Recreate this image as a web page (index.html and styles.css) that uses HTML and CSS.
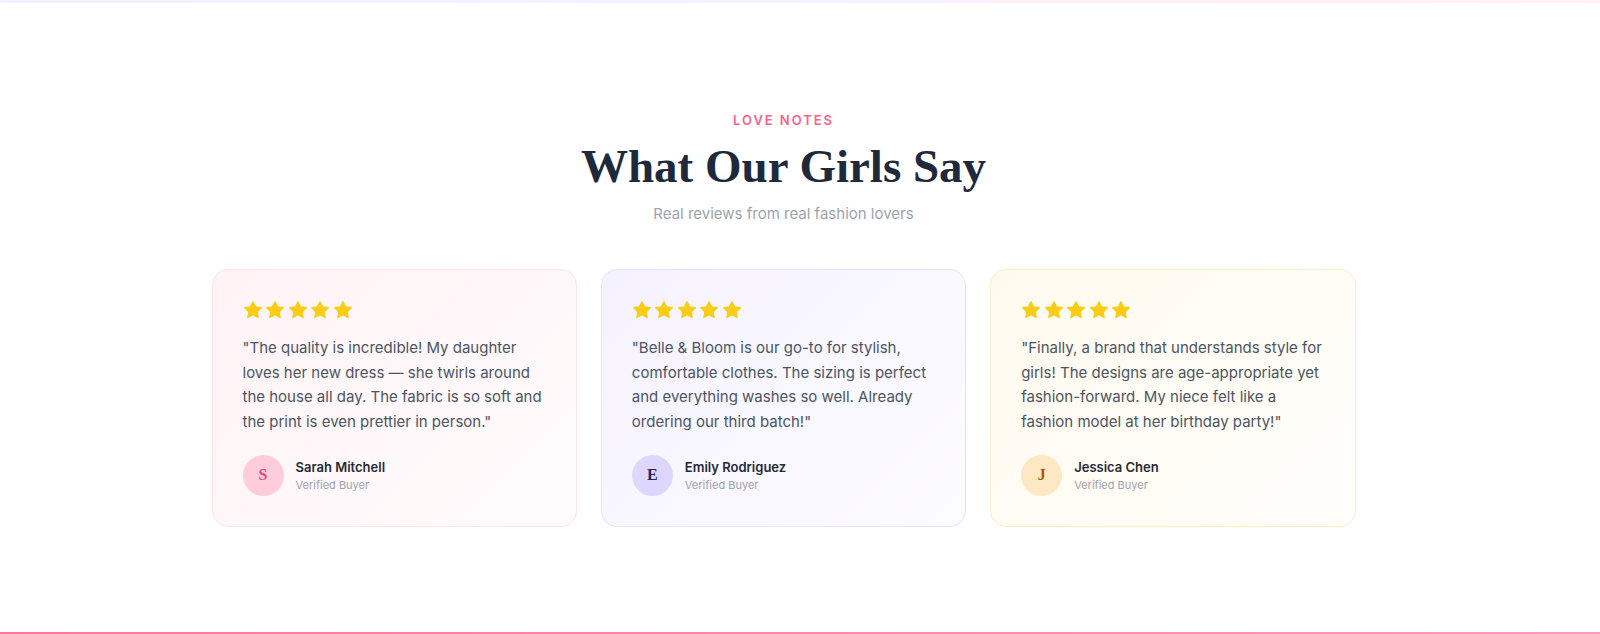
FILE: index.html
```html
<!DOCTYPE html>
<html lang="en">
<head>
    <meta charset="UTF-8">
    <meta name="viewport" content="width=device-width, initial-scale=1.0">
    <title>Love Notes - Belle &amp; Bloom</title>
    <link rel="stylesheet" href="styles.css">
</head>
<body>
    <div class="top-fade"></div>

    <section class="testimonials">
        <div class="container">
            <div class="section-head">
                <span class="eyebrow">Love Notes</span>
                <h2>What Our Girls Say</h2>
                <p class="subtitle">Real reviews from real fashion lovers</p>
            </div>

            <div class="cards">
                <div class="card card-pink">
                    <div class="stars">
                        <svg viewBox="0 0 24 24"><path d="M12 2l3.09 6.26L22 9.27l-5 4.87 1.18 6.88L12 17.77l-6.18 3.25L7 14.14 2 9.27l6.91-1.01L12 2z"/></svg>
                        <svg viewBox="0 0 24 24"><path d="M12 2l3.09 6.26L22 9.27l-5 4.87 1.18 6.88L12 17.77l-6.18 3.25L7 14.14 2 9.27l6.91-1.01L12 2z"/></svg>
                        <svg viewBox="0 0 24 24"><path d="M12 2l3.09 6.26L22 9.27l-5 4.87 1.18 6.88L12 17.77l-6.18 3.25L7 14.14 2 9.27l6.91-1.01L12 2z"/></svg>
                        <svg viewBox="0 0 24 24"><path d="M12 2l3.09 6.26L22 9.27l-5 4.87 1.18 6.88L12 17.77l-6.18 3.25L7 14.14 2 9.27l6.91-1.01L12 2z"/></svg>
                        <svg viewBox="0 0 24 24"><path d="M12 2l3.09 6.26L22 9.27l-5 4.87 1.18 6.88L12 17.77l-6.18 3.25L7 14.14 2 9.27l6.91-1.01L12 2z"/></svg>
                    </div>
                    <p class="quote">"The quality is incredible! My daughter loves her new dress — she twirls around the house all day. The fabric is so soft and the print is even prettier in person."</p>
                    <div class="author">
                        <div class="avatar">S</div>
                        <div>
                            <div class="name">Sarah Mitchell</div>
                            <div class="role">Verified Buyer</div>
                        </div>
                    </div>
                </div>

                <div class="card card-violet">
                    <div class="stars">
                        <svg viewBox="0 0 24 24"><path d="M12 2l3.09 6.26L22 9.27l-5 4.87 1.18 6.88L12 17.77l-6.18 3.25L7 14.14 2 9.27l6.91-1.01L12 2z"/></svg>
                        <svg viewBox="0 0 24 24"><path d="M12 2l3.09 6.26L22 9.27l-5 4.87 1.18 6.88L12 17.77l-6.18 3.25L7 14.14 2 9.27l6.91-1.01L12 2z"/></svg>
                        <svg viewBox="0 0 24 24"><path d="M12 2l3.09 6.26L22 9.27l-5 4.87 1.18 6.88L12 17.77l-6.18 3.25L7 14.14 2 9.27l6.91-1.01L12 2z"/></svg>
                        <svg viewBox="0 0 24 24"><path d="M12 2l3.09 6.26L22 9.27l-5 4.87 1.18 6.88L12 17.77l-6.18 3.25L7 14.14 2 9.27l6.91-1.01L12 2z"/></svg>
                        <svg viewBox="0 0 24 24"><path d="M12 2l3.09 6.26L22 9.27l-5 4.87 1.18 6.88L12 17.77l-6.18 3.25L7 14.14 2 9.27l6.91-1.01L12 2z"/></svg>
                    </div>
                    <p class="quote">"Belle &amp; Bloom is our go-to for stylish, comfortable clothes. The sizing is perfect and everything washes so well. Already ordering our third batch!"</p>
                    <div class="author">
                        <div class="avatar">E</div>
                        <div>
                            <div class="name">Emily Rodriguez</div>
                            <div class="role">Verified Buyer</div>
                        </div>
                    </div>
                </div>

                <div class="card card-amber">
                    <div class="stars">
                        <svg viewBox="0 0 24 24"><path d="M12 2l3.09 6.26L22 9.27l-5 4.87 1.18 6.88L12 17.77l-6.18 3.25L7 14.14 2 9.27l6.91-1.01L12 2z"/></svg>
                        <svg viewBox="0 0 24 24"><path d="M12 2l3.09 6.26L22 9.27l-5 4.87 1.18 6.88L12 17.77l-6.18 3.25L7 14.14 2 9.27l6.91-1.01L12 2z"/></svg>
                        <svg viewBox="0 0 24 24"><path d="M12 2l3.09 6.26L22 9.27l-5 4.87 1.18 6.88L12 17.77l-6.18 3.25L7 14.14 2 9.27l6.91-1.01L12 2z"/></svg>
                        <svg viewBox="0 0 24 24"><path d="M12 2l3.09 6.26L22 9.27l-5 4.87 1.18 6.88L12 17.77l-6.18 3.25L7 14.14 2 9.27l6.91-1.01L12 2z"/></svg>
                        <svg viewBox="0 0 24 24"><path d="M12 2l3.09 6.26L22 9.27l-5 4.87 1.18 6.88L12 17.77l-6.18 3.25L7 14.14 2 9.27l6.91-1.01L12 2z"/></svg>
                    </div>
                    <p class="quote">"Finally, a brand that understands style for girls! The designs are age-appropriate yet fashion-forward. My niece felt like a fashion model at her birthday party!"</p>
                    <div class="author">
                        <div class="avatar">J</div>
                        <div>
                            <div class="name">Jessica Chen</div>
                            <div class="role">Verified Buyer</div>
                        </div>
                    </div>
                </div>
            </div>
        </div>
    </section>

    <div class="bottom-line"></div>
</body>
</html>
```

FILE: styles.css
```css
* {
    margin: 0;
    padding: 0;
    box-sizing: border-box;
}

body {
    background: #fff;
    font-family: 'Inter', 'Noto Sans', sans-serif;
    height: 634px;
    overflow: hidden;
}

.top-fade {
    height: 3px;
    background: linear-gradient(90deg, #f4f0ff, #fdf1f9);
}

.testimonials {
    padding: 107px 33px 105px 0;
}

.container {
    max-width: 1144px;
    margin: 0 auto;
}

.section-head {
    text-align: center;
    margin-bottom: 43px;
}

.eyebrow {
    display: block;
    color: #f7648a;
    font-size: 13px;
    line-height: 20px;
    font-weight: 600;
    letter-spacing: 0.15em;
    text-transform: uppercase;
}

h2 {
    margin-top: 8px;
    font-family: 'Liberation Serif', serif;
    font-size: 47px;
    line-height: 1.2;
    font-weight: 700;
    color: #1e293b;
}

.subtitle {
    margin-top: 8px;
    font-size: 15px;
    line-height: 24px;
    color: #9ca3af;
}

.cards {
    display: grid;
    grid-template-columns: repeat(3, 1fr);
    gap: 24px;
}

.card {
    border: 1px solid;
    border-radius: 16px;
    padding: 30px;
}

.card-pink {
    background: linear-gradient(135deg, #fff3f6, #fffbfc);
    border-color: #fde4ec;
}

.card-violet {
    background: linear-gradient(135deg, #f5f2ff, #fcfbff);
    border-color: #e8e4fb;
}

.card-amber {
    background: linear-gradient(135deg, #fffaee, #fffefb);
    border-color: #fdedce;
}

.stars {
    display: flex;
    gap: 2.5px;
    margin-bottom: 16px;
}

.stars svg {
    width: 20px;
    height: 20px;
    fill: #facc15;
    stroke: #facc15;
    stroke-width: 1.5;
    stroke-linejoin: round;
}

.quote {
    font-size: 15px;
    line-height: 1.625;
    color: #4b5563;
}

.author {
    display: flex;
    align-items: center;
    gap: 12px;
    margin-top: 21px;
}

.avatar {
    width: 41px;
    height: 41px;
    border-radius: 50%;
    display: flex;
    align-items: center;
    justify-content: center;
    font-family: 'Liberation Serif', serif;
    font-weight: 700;
    font-size: 16px;
}

.card-pink .avatar {
    background: #fecdd9;
    color: #e8467a;
}

.card-violet .avatar {
    background: #ddd6fe;
    color: #2e1f5e;
}

.card-amber .avatar {
    background: #fde8c4;
    color: #b4530b;
}

.name {
    font-size: 13px;
    line-height: 19px;
    font-weight: 600;
    color: #1f2937;
}

.role {
    font-size: 11px;
    line-height: 16px;
    color: #9ca3af;
}

.bottom-line {
    height: 2px;
    background: linear-gradient(90deg, #ff7797, #ff9aba);
}
```
